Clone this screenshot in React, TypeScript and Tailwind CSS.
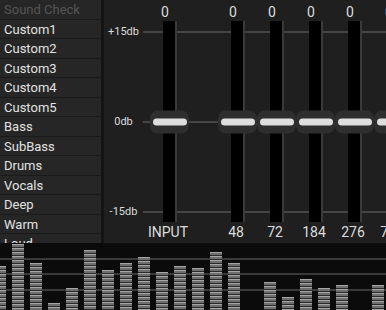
import React from "react";

const presets = [
  "Custom1",
  "Custom2",
  "Custom3",
  "Custom4",
  "Custom5",
  "Bass",
  "SubBass",
  "Drums",
  "Vocals",
  "Deep",
  "Warm",
  "Loud",
];

const bands = [
  { label: "INPUT", value: "0", gap: "ml-[7px]" },
  { label: "48", value: "0", gap: "ml-[29px]" },
  { label: "72", value: "0", gap: "ml-0" },
  { label: "184", value: "0", gap: "ml-0" },
  { label: "276", value: "0", gap: "ml-0" },
  { label: "736", value: "0", gap: "ml-0" },
];

const spectrum = [44, 66, 47, 7, 22, 60, 40, 47, 53, 38, 44, 42, 58, 47, 0, 28, 13, 31, 22, 25, 0, 25];

function Slider({ label, value, gap }: { label: string; value: string; gap: string }) {
  return (
    <div className={`flex w-[39px] shrink-0 flex-col items-center ${gap}`}>
      <div className="mr-[9px] h-[21px] text-[14px] leading-[24px] text-[#dcdcdc]">{value}</div>
      <div className="relative flex h-[201px] w-[39px] justify-center">
        <div className="h-full w-[14px] border-r-2 border-[#3a3a3a] bg-black" />
        <div className="absolute left-0 top-1/2 flex h-[23px] w-[39px] -translate-y-1/2 items-center justify-center rounded-[8px] bg-[#2e2e2e]">
          <div className="h-[7px] w-[34px] rounded-full bg-[#dedede]" />
        </div>
      </div>
      <div className="mr-[3px] h-[21px] whitespace-nowrap text-[14px] leading-[21px] text-[#dcdcdc]">{label}</div>
    </div>
  );
}

export default function App() {
  return (
    <div
      className="h-[310px] w-[386px] overflow-hidden bg-[#0b0b0b]"
      style={{ fontFamily: "Roboto, 'Noto Sans', sans-serif" }}
    >
      <div className="flex h-[243px]">
        <div className="w-[101px] shrink-0 overflow-hidden bg-[#262626]">
          <div className="h-[19.5px] border-b border-[#1b1b1b] pl-[4px] text-[13px] leading-[19.5px] text-[#555555]">
            Sound Check
          </div>
          {presets.map((p) => (
            <div
              key={p}
              className="h-[19.5px] border-b border-[#1b1b1b] pl-[4px] text-[13px] leading-[19.5px] text-[#e2e2e2]"
            >
              {p}
            </div>
          ))}
        </div>
        <div className="w-[3px] shrink-0 bg-[#141414]" />
        <div className="relative flex flex-1 overflow-hidden bg-[#1f1f1f]">
          <div className="absolute left-[39px] right-0 top-[31px] h-[2px] bg-[#454545]" />
          <div className="absolute left-[39px] right-0 top-[121px] h-[2px] bg-[#454545]" />
          <div className="absolute left-[39px] right-0 top-[211px] h-[2px] bg-[#454545]" />
          <div className="relative flex w-[39px] shrink-0 flex-col items-center gap-[76px] pt-[25px] text-[11px] leading-[14px] text-[#dcdcdc]">
            <div>+15db</div>
            <div>0db</div>
            <div>-15db</div>
          </div>
          <div className="relative flex">
            {bands.map((b) => (
              <Slider key={b.label} label={b.label} value={b.value} gap={b.gap} />
            ))}
          </div>
        </div>
      </div>
      <div className="relative h-[67px] overflow-hidden bg-[#0b0b0b]">
        <div className="absolute left-0 right-0 top-[15px] h-[2px] bg-[#3a3a3a]" />
        <div className="absolute left-0 right-0 top-[30px] h-[2px] bg-[#3a3a3a]" />
        <div className="absolute left-0 right-0 top-[46px] h-[2px] bg-[#3a3a3a]" />
        <div className="relative ml-[-6px] flex h-full items-end gap-[6px]">
          {spectrum.map((h, i) => (
            <div
              key={i}
              className="w-[12px] shrink-0 bg-[repeating-linear-gradient(to_bottom,#a6a6a6_0px,#a6a6a6_1px,#6e6e6e_1px,#6e6e6e_3px,#2a2a2a_3px,#2a2a2a_4px)]"
              style={{ height: `${h}px` }}
            />
          ))}
        </div>
      </div>
    </div>
  );
}
